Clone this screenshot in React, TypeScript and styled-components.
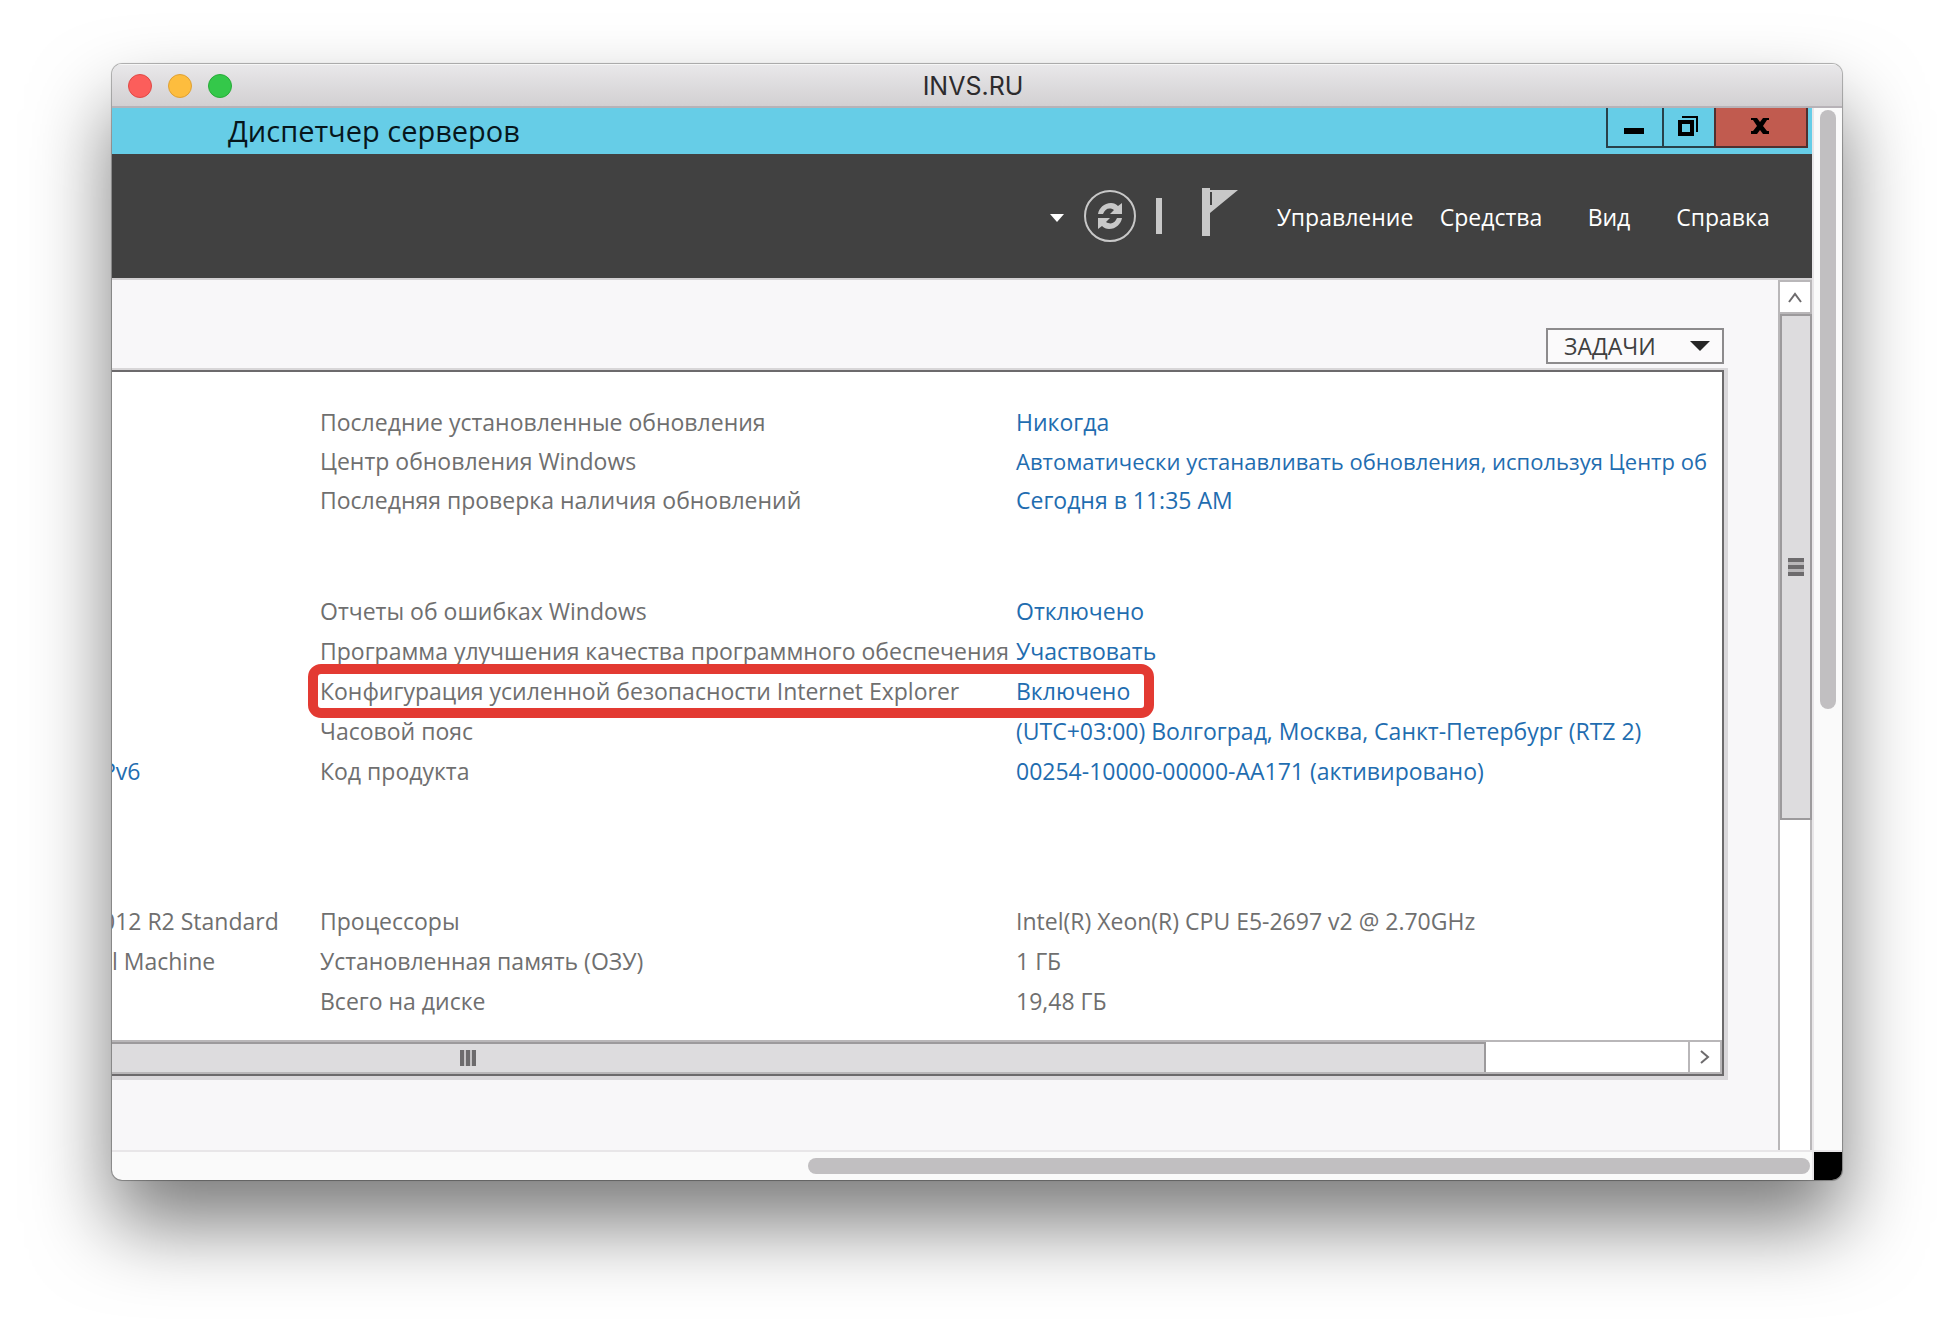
import React from "react";
import styled, { createGlobalStyle } from "styled-components";

const uiFont = '"Open Sans", "Noto Sans", sans-serif';
const titleFont = 'Inter, "Noto Sans", sans-serif';

const GlobalStyle = createGlobalStyle`
  *, *::before, *::after { box-sizing: border-box; }
  body { margin: 0; background: #fff; font-family: ${uiFont}; }
  button { font: inherit; color: inherit; margin: 0; padding: 0; border: 0; border-radius: 0; background: none; }
`;

const Page = styled.div`
  padding: 64px 112px 159px;
  overflow: hidden;
`;

const MacWindow = styled.main`
  display: flex;
  flex-direction: column;
  overflow: hidden;
  border-radius: 10px;
  background: #fafafa;
  box-shadow: 0 0 0 1px rgba(0, 0, 0, 0.22), 0 0 2px rgba(0, 0, 0, 0.3), 0 44px 80px rgba(0, 0, 0, 0.52);
`;

const MacTitleBar = styled.header`
  display: grid;
  grid-template-columns: 1fr auto 1fr;
  align-items: center;
  height: 44px;
  padding: 2px 16px 0;
  border-bottom: 2px solid #b7b2b7;
  background: linear-gradient(#e9e8ea, #d2d0d2);
  box-shadow: inset 0 1px 0 #f6f6f6;
`;

const TrafficLights = styled.div`
  display: flex;
  gap: 16px;
`;

const TrafficLight = styled.button<{ $fill: string; $edge: string }>`
  width: 24px;
  height: 24px;
  border: 1px solid ${(p) => p.$edge};
  border-radius: 50%;
  background: ${(p) => p.$fill};
`;

const MacTitle = styled.h1`
  margin: 0;
  padding-right: 8px;
  font: 400 25px/32px ${titleFont};
  color: #2d2b2d;
`;

const Viewport = styled.div`
  display: grid;
  grid-template-columns: minmax(0, 1fr) 30px;
`;

const Remote = styled.section`
  min-width: 0;
`;

const MacTrackV = styled.div`
  padding: 2px 6px 0;
  border-left: 2px solid #e8e6e8;
`;

const MacThumbV = styled.div`
  width: 16px;
  height: 57.6%;
  border-radius: 8px;
  background: #c1bfc1;
`;

const MacTrackH = styled.div`
  display: flex;
  justify-content: flex-end;
  padding: 6px 2px 6px 0;
  height: 30px;
  border-top: 2px solid #e8e6e8;
`;

const MacThumbH = styled.div`
  width: 59%;
  height: 16px;
  border-radius: 8px;
  background: #c1bfc1;
`;

const Corner = styled.div`
  border: solid #e8e6e8;
  border-width: 2px 0 0 2px;
  background: #000;
`;

const WinTitleBar = styled.div`
  display: flex;
  justify-content: space-between;
  height: 46px;
  padding: 0 4px 0 116px;
  background: #66cde7;
`;

const WinTitle = styled.h2`
  margin: 0;
  font: 400 29px/46px ${uiFont};
  color: #06161c;
`;

const WinButtons = styled.div`
  display: flex;
  height: 40px;
`;

const WinButton = styled.button<{ $width: number; $danger?: boolean }>`
  display: flex;
  justify-content: center;
  align-items: center;
  width: ${(p) => p.$width}px;
  padding: 0 2px 2px 0;
  border: solid #28414a;
  border-width: 0 0 2px 2px;
  background: ${(p) => (p.$danger ? "#c15b4f" : "transparent")};
  &:last-child { border-right-width: 2px; border-color: #4f3030; }
`;

const CommandBar = styled.nav`
  display: flex;
  justify-content: flex-end;
  align-items: center;
  height: 126px;
  padding-right: 20px;
  border-bottom: 2px solid #d2d0d2;
  background: #414141;
  color: #fff;
`;

const BarTools = styled.div`
  display: flex;
  align-items: center;
  margin-right: 34px;
`;

const BarButton = styled.button<{ $gap: number }>`
  display: flex;
  margin-right: ${(p) => p.$gap}px;
`;

const Separator = styled.span`
  width: 6px;
  height: 36px;
  margin-right: 40px;
  background: #c8c8c8;
`;

const Menu = styled.div`
  display: grid;
  grid-template-columns: 146px 146px 90px 138px;
  padding-top: 2px;
`;

const MenuButton = styled.button`
  font-size: 23px;
  line-height: 32px;
  text-align: center;
  white-space: nowrap;
`;

const Workspace = styled.div`
  display: grid;
  grid-template-columns: minmax(0, 1fr) 34px;
  background: #f8f7f9;
`;

const Content = styled.div`
  display: flex;
  flex-direction: column;
  padding: 48px 54px 74px 0;
`;

const TasksButton = styled.button`
  display: flex;
  align-self: flex-end;
  justify-content: space-between;
  align-items: center;
  width: 178px;
  height: 36px;
  margin-bottom: 6px;
  padding: 0 12px 0 16px;
  border: 2px solid #8d8b8d;
  background: #fbfafb;
  color: #404040;
  font-size: 23px;
  line-height: 32px;
`;

const Panel = styled.section`
  border: solid #6c6a6c;
  border-width: 2px 2px 2px 0;
  background: #fff;
  box-shadow: 0 -2px 0 #d8d6d8, 4px 4px 0 #dad8db, 0 4px 0 #dad8db, 4px -2px 0 #dad8db;
`;

const Properties = styled.table`
  display: flex;
  flex-direction: column;
  padding: 31px 0 19px;
  overflow: hidden;
  color: #6f6f6f;
  font-size: 23px;
`;

const Group = styled.tbody<{ $row: number; $after: number }>`
  display: block;
  margin-bottom: ${(p) => p.$after}px;
  line-height: ${(p) => p.$row}px;
`;

const Row = styled.tr<{ $marked?: boolean }>`
  display: grid;
  grid-template-columns: 208px 696px minmax(0, 1fr);
  position: relative;
  &::after {
    content: "";
    display: ${(p) => (p.$marked ? "block" : "none")};
    position: absolute;
    top: -7px;
    left: 196px;
    width: 846px;
    height: 54px;
    border: 10px solid #e33a32;
    border-radius: 13px;
    pointer-events: none;
  }
`;

const Cell = styled.td<{ $cut?: boolean; $long?: boolean }>`
  display: block;
  min-width: 0;
  padding: 0;
  margin-left: ${(p) => (p.$cut ? -10 : 0)}px;
  font-size: ${(p) => (p.$long ? 22 : 23)}px;
  white-space: nowrap;
`;

const Label = styled.th`
  display: block;
  padding: 0;
  font-weight: 400;
  text-align: left;
  white-space: nowrap;
`;

const ValueLink = styled.a`
  color: #1f6db0;
  text-decoration: none;
`;

const ScrollH = styled.div`
  display: grid;
  grid-template-columns: 34fr 5fr 34px;
  height: 34px;
  border: solid #b9b7b9;
  border-width: 2px 0;
`;

const ThumbH = styled.div`
  display: flex;
  align-items: center;
  padding-left: 348px;
  border: solid #9c9a9c;
  border-width: 2px 2px 0 0;
  background: #dddcde;
`;

const ScrollRight = styled.button`
  grid-column: 3;
  display: flex;
  justify-content: center;
  align-items: center;
  border: solid #b9b7b9;
  border-width: 0 2px;
  background: #fff;
`;

const ScrollV = styled.div`
  display: grid;
  grid-template-rows: 34px 23fr 15fr;
  border: solid #b9b7b9;
  border-width: 0 2px;
  background: #fff;
`;

const ScrollUp = styled.button`
  display: flex;
  justify-content: center;
  align-items: center;
  border: solid #b9b7b9;
  border-width: 2px 0;
`;

const ThumbV = styled.div`
  display: flex;
  justify-content: center;
  padding-top: 242px;
  margin-right: -2px;
  border: 2px solid #9c9a9c;
  background: #dddcde;
`;

const Grip = styled.div<{ $vertical?: boolean }>`
  width: 16px;
  height: ${(p) => (p.$vertical ? 18 : 16)}px;
  background: ${(p) =>
    p.$vertical
      ? "repeating-linear-gradient(#6d6b6d 0 4px, #b9b7b9 4px 7px)"
      : "repeating-linear-gradient(90deg, #6d6b6d 0 4px, #c4c2c4 4px 6px)"};
`;

type Property = {
  left?: string;
  cut?: boolean;
  leftLink?: boolean;
  label: string;
  value: string;
  link?: boolean;
  long?: boolean;
  marked?: boolean;
};

const groups: { row: number; after: number; items: Property[] }[] = [
  {
    row: 39,
    after: 71,
    items: [
      { label: "Последние установленные обновления", value: "Никогда", link: true },
      {
        label: "Центр обновления Windows",
        value: "Автоматически устанавливать обновления, используя Центр об",
        link: true,
        long: true,
      },
      { label: "Последняя проверка наличия обновлений", value: "Сегодня в 11:35 AM", link: true },
    ],
  },
  {
    row: 40,
    after: 110,
    items: [
      { label: "Отчеты об ошибках Windows", value: "Отключено", link: true },
      { label: "Программа улучшения качества программного обеспечения", value: "Участвовать", link: true },
      { label: "Конфигурация усиленной безопасности Internet Explorer", value: "Включено", link: true, marked: true },
      { label: "Часовой пояс", value: "(UTC+03:00) Волгоград, Москва, Санкт-Петербург (RTZ 2)", link: true },
      { left: "Pv6", cut: true, leftLink: true, label: "Код продукта", value: "00254-10000-00000-AA171 (активировано)", link: true },
    ],
  },
  {
    row: 40,
    after: 0,
    items: [
      { left: "012 R2 Standard", cut: true, label: "Процессоры", value: "Intel(R) Xeon(R) CPU E5-2697 v2 @ 2.70GHz" },
      { left: "l Machine", label: "Установленная память (ОЗУ)", value: "1 ГБ" },
      { label: "Всего на диске", value: "19,48 ГБ" },
    ],
  },
];

const maybeLink = (text: string | undefined, link?: boolean) =>
  link ? <ValueLink href="#">{text}</ValueLink> : text;

const turnArrow = "M14 24c1-6 6-11 13-11 3 0 5 1 7 3l4-3v11H26l4-4c-5-3-9-1-11 4z";

export default function App() {
  return (
    <>
      <GlobalStyle />
      <Page>
        <MacWindow>
          <MacTitleBar>
            <TrafficLights>
              <TrafficLight $fill="#fc5e5b" $edge="#df4946" aria-label="Close" />
              <TrafficLight $fill="#fdbd3e" $edge="#dea034" aria-label="Minimize" />
              <TrafficLight $fill="#34c84a" $edge="#28ab39" aria-label="Zoom" />
            </TrafficLights>
            <MacTitle>INVS.RU</MacTitle>
          </MacTitleBar>
          <Viewport>
            <Remote>
              <WinTitleBar>
                <WinTitle>Диспетчер серверов</WinTitle>
                <WinButtons>
                  <WinButton $width={56} aria-label="Свернуть">
                    <svg width="20" height="30" viewBox="0 0 20 30">
                      <rect y="17" width="20" height="6" />
                    </svg>
                  </WinButton>
                  <WinButton $width={52} aria-label="Восстановить">
                    <svg width="20" height="22" viewBox="0 0 20 22">
                      <path d="M2 7h12v12H2z" fill="none" stroke="#000" strokeWidth="4" />
                      <path d="M4 2h15v15" fill="none" stroke="#000" strokeWidth="2" />
                    </svg>
                  </WinButton>
                  <WinButton $width={94} $danger aria-label="Закрыть">
                    <svg width="18" height="18" viewBox="0 0 18 18">
                      <path d="M0 1h6l3 4 3-4h6v2h-2l-4 6 4 5h2v3h-6l-3-4-3 4H0v-3h2l4-5-4-6H0z" />
                    </svg>
                  </WinButton>
                </WinButtons>
              </WinTitleBar>
              <CommandBar>
                <BarTools>
                  <BarButton $gap={20} aria-label="История">
                    <svg width="14" height="12" viewBox="0 0 14 12">
                      <path d="M0 4h14l-7 8z" fill="#fff" />
                    </svg>
                  </BarButton>
                  <BarButton $gap={20} aria-label="Обновить">
                    <svg width="52" height="52" viewBox="0 0 52 52">
                      <circle cx="26" cy="26" r="25" fill="none" stroke="#c8c8c8" strokeWidth="2" />
                      <g fill="#c8c8c8">
                        <path d={turnArrow} />
                        <path d={turnArrow} transform="rotate(180 26 26)" />
                      </g>
                    </svg>
                  </BarButton>
                  <Separator />
                  <BarButton $gap={0} aria-label="Уведомления">
                    <svg width="36" height="56" viewBox="0 0 36 56">
                      <path d="M0 0h8v48H0zM8 2h28L8 25z" fill="#c8c8c8" />
                      <path d="M9 4v13" stroke="#414141" strokeWidth="2" />
                    </svg>
                  </BarButton>
                </BarTools>
                <Menu>
                  <MenuButton>Управление</MenuButton>
                  <MenuButton>Средства</MenuButton>
                  <MenuButton>Вид</MenuButton>
                  <MenuButton>Справка</MenuButton>
                </Menu>
              </CommandBar>
              <Workspace>
                <Content>
                  <TasksButton>
                    ЗАДАЧИ
                    <svg width="20" height="10" viewBox="0 0 20 10">
                      <path d="M0 0h20L10 10z" fill="#262626" />
                    </svg>
                  </TasksButton>
                  <Panel>
                    <Properties>
                      {groups.map((group, g) => (
                        <Group key={g} $row={group.row} $after={group.after}>
                          {group.items.map((item) => (
                            <Row key={item.label} $marked={item.marked}>
                              <Cell $cut={item.cut}>{maybeLink(item.left, item.leftLink)}</Cell>
                              <Label scope="row">{item.label}</Label>
                              <Cell $long={item.long}>{maybeLink(item.value, item.link)}</Cell>
                            </Row>
                          ))}
                        </Group>
                      ))}
                    </Properties>
                    <ScrollH>
                      <ThumbH>
                        <Grip />
                      </ThumbH>
                      <ScrollRight aria-label="Прокрутить вправо">
                        <svg width="12" height="16" viewBox="0 0 12 16">
                          <path d="M2 2l7 6-7 6" fill="none" stroke="#6d6b6d" strokeWidth="2" />
                        </svg>
                      </ScrollRight>
                    </ScrollH>
                  </Panel>
                </Content>
                <ScrollV>
                  <ScrollUp aria-label="Прокрутить вверх">
                    <svg width="16" height="12" viewBox="0 0 16 12">
                      <path d="M2 11l6-8 6 8" fill="none" stroke="#6d6b6d" strokeWidth="2" />
                    </svg>
                  </ScrollUp>
                  <ThumbV>
                    <Grip $vertical />
                  </ThumbV>
                </ScrollV>
              </Workspace>
            </Remote>
            <MacTrackV>
              <MacThumbV />
            </MacTrackV>
            <MacTrackH>
              <MacThumbH />
            </MacTrackH>
            <Corner />
          </Viewport>
        </MacWindow>
      </Page>
    </>
  );
}
